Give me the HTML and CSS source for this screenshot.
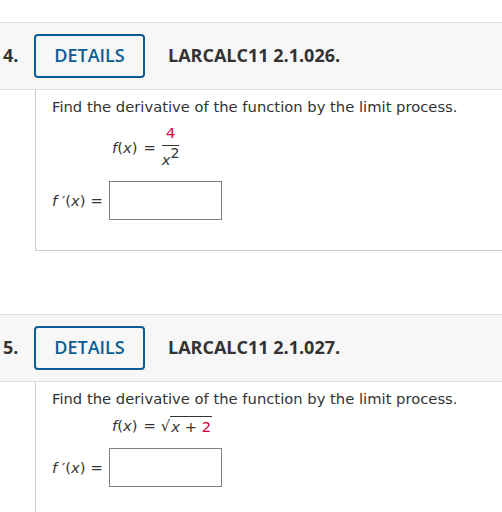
FILE: index.html
```html
<!DOCTYPE html>
<html>
<head>
<meta charset="utf-8">
<link rel="stylesheet" href="styles.css">
</head>
<body>
<div class="page">
  <div class="question">
    <div class="qhead">
      <span class="num">4.</span>
      <span class="btn">DETAILS</span>
      <span class="title">LARCALC11 2.1.026.</span>
    </div>
    <div class="qbody">
      <p class="prompt">Find the derivative of the function by the limit process.</p>
      <div class="math">
        <span class="lhs"><i>f</i>(<i>x</i>)</span>
        <span class="eq">=</span>
        <span class="frac">
          <span class="numr red">4</span>
          <span class="den"><i>x</i><sup>2</sup></span>
        </span>
      </div>
      <div class="answer">
        <span class="lhs"><i>f</i> ′(<i>x</i>)</span>
        <span class="eq">=</span>
        <span class="input"></span>
      </div>
    </div>
  </div>

  <div class="question q2">
    <div class="qhead">
      <span class="num">5.</span>
      <span class="btn">DETAILS</span>
      <span class="title">LARCALC11 2.1.027.</span>
    </div>
    <div class="qbody">
      <p class="prompt">Find the derivative of the function by the limit process.</p>
      <div class="math">
        <span class="lhs"><i>f</i>(<i>x</i>)</span>
        <span class="eq">=</span>
        <span class="root">√<span class="radicand"><i>x</i> + <span class="red">2</span></span></span>
      </div>
      <div class="answer">
        <span class="lhs"><i>f</i> ′(<i>x</i>)</span>
        <span class="eq">=</span>
        <span class="input"></span>
      </div>
    </div>
  </div>
</div>
</body>
</html>
```

FILE: styles.css
```css
html, body {
  margin: 0;
  padding: 0;
  background: #ffffff;
}

.page {
  padding-top: 22px;
  width: 502px;
  overflow: hidden;
}

.question.q2 {
  margin-top: 63px;
}

.qhead {
  display: flex;
  align-items: center;
  height: 66px;
  background: #f7f7f7;
  border-top: 1px solid #dddddd;
  border-bottom: 1px solid #dddddd;
  font-family: "Open Sans", "Liberation Sans", sans-serif;
  font-size: 18px;
  font-weight: 700;
  color: #333333;
}

.num {
  width: 31px;
  padding-left: 3px;
  padding-bottom: 2px;
}

.btn {
  box-sizing: border-box;
  width: 111px;
  height: 44px;
  border: 2px solid #0b5e95;
  border-radius: 4px;
  display: flex;
  align-items: center;
  justify-content: center;
  padding-bottom: 2px;
  color: #0b5e95;
  font-weight: 600;
}

.title {
  margin-left: 23px;
  padding-bottom: 2px;
}

.qbody {
  margin-left: 35px;
  border-left: 1px solid #cccccc;
  border-bottom: 1px solid #cccccc;
  padding: 7px 16px 30px 16px;
  font-family: "DejaVu Sans", Verdana, sans-serif;
  font-size: 14.75px;
  color: #333333;
}

.q2 .qbody {
  border-bottom: none;
}

.prompt {
  margin: 0;
  line-height: 20px;
}

i {
  font-style: oblique;
}

.math {
  display: flex;
  align-items: center;
  margin-top: 6px;
  margin-left: 60px;
  line-height: 21px;
}

.eq {
  margin: 0 5px 0 6px;
}

.frac {
  display: inline-flex;
  flex-direction: column;
  align-items: center;
  padding: 0 1px;
}

.numr {
  display: block;
  line-height: 20px;
  padding: 0 4px 2px 4px;
  border-bottom: 1px solid #333333;
}

.den {
  display: block;
  line-height: 22px;
  padding-top: 3px;
}

.den sup {
  font-size: 14px;
  vertical-align: 7px;
  line-height: 0;
}

.red {
  color: #d5003c;
}

.root {
  display: inline-flex;
  align-items: flex-end;
}

.radicand {
  border-top: 1px solid #333333;
  padding: 0 1px 0 1px;
  line-height: 19px;
}

.answer {
  display: flex;
  align-items: center;
  margin-top: 10px;
}

.q2 .answer {
  margin-top: 12px;
}

.answer .eq {
  margin: 0 6px 0 5px;
}

.input {
  box-sizing: border-box;
  width: 113px;
  height: 39px;
  border: 1px solid #808080;
  background: #ffffff;
}
```
